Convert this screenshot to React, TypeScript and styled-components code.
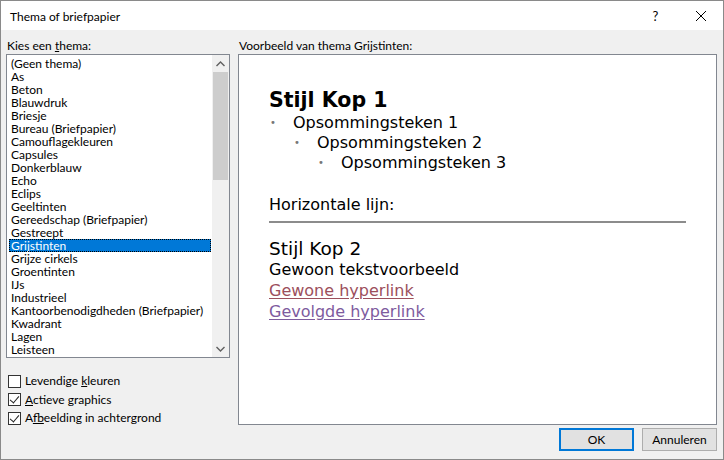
import React from 'react';
import styled, { createGlobalStyle } from 'styled-components';

const GlobalStyle = createGlobalStyle`
	html, body {
		margin: 0;
		padding: 0;
		background: #ffffff;
	}
	body {
		font-family: Lato, 'Noto Sans', sans-serif;
		font-size: 12px;
		color: #000;
	}
`;

const themes = [
	'(Geen thema)',
	'As',
	'Beton',
	'Blauwdruk',
	'Briesje',
	'Bureau (Briefpapier)',
	'Camouflagekleuren',
	'Capsules',
	'Donkerblauw',
	'Echo',
	'Eclips',
	'Geeltinten',
	'Gereedschap (Briefpapier)',
	'Gestreept',
	'Grijstinten',
	'Grijze cirkels',
	'Groentinten',
	'IJs',
	'Industrieel',
	'Kantoorbenodigdheden (Briefpapier)',
	'Kwadrant',
	'Lagen',
	'Leisteen',
];

const selected = 'Grijstinten';

export default function App() {
	return (
		<>
			<GlobalStyle />
			<Window>
				<TitleBar>
					<Title>Thema of briefpapier</Title>
					<TitleButton>?</TitleButton>
					<TitleButton>
						<svg width='12' height='12' viewBox='0 0 12 12'>
							<path d='M1 1 L11 11 M11 1 L1 11' stroke='#000' strokeWidth='1' />
						</svg>
					</TitleButton>
				</TitleBar>
				<Body>
					<LeftColumn>
						<Label>
							Kies een <u>t</u>hema:
						</Label>
						<ListBox>
							<Items>
								{themes.map(t => (
									<Item key={t} selected={t === selected}>
										{t}
									</Item>
								))}
							</Items>
							<ScrollBar>
								<Arrow>
									<svg width='9' height='6' viewBox='0 0 9 6'>
										<path d='M0.5 5 L4.5 1 L8.5 5' fill='none' stroke='#606060' strokeWidth='1.4' />
									</svg>
								</Arrow>
								<Track>
									<Thumb />
								</Track>
								<Arrow>
									<svg width='9' height='6' viewBox='0 0 9 6'>
										<path d='M0.5 1 L4.5 5 L8.5 1' fill='none' stroke='#606060' strokeWidth='1.4' />
									</svg>
								</Arrow>
							</ScrollBar>
						</ListBox>
						<Options>
							<CheckRow>
								<CheckBox />
								<span>
									Levendige <u>k</u>leuren
								</span>
							</CheckRow>
							<CheckRow>
								<CheckBox>
									<CheckMark />
								</CheckBox>
								<span>
									<u>A</u>ctieve graphics
								</span>
							</CheckRow>
							<CheckRow>
								<CheckBox>
									<CheckMark />
								</CheckBox>
								<span>
									A<u>f</u>beelding in achtergrond
								</span>
							</CheckRow>
						</Options>
					</LeftColumn>
					<RightColumn>
						<Label>Voorbeeld van thema Grijstinten:</Label>
						<Preview>
							<Heading1>Stijl Kop 1</Heading1>
							<Bullet level={0}>Opsommingsteken 1</Bullet>
							<Bullet level={1}>Opsommingsteken 2</Bullet>
							<Bullet level={2}>Opsommingsteken 3</Bullet>
							<RuleLabel>Horizontale lijn:</RuleLabel>
							<Rule />
							<Heading2>Stijl Kop 2</Heading2>
							<PreviewText>Gewoon tekstvoorbeeld</PreviewText>
							<PreviewLink color='#9c4f5c'>Gewone hyperlink</PreviewLink>
							<PreviewLink color='#7e5b9e'>Gevolgde hyperlink</PreviewLink>
						</Preview>
						<Buttons>
							<Button primary>OK</Button>
							<Button>Annuleren</Button>
						</Buttons>
					</RightColumn>
				</Body>
			</Window>
		</>
	);
}

const Window = styled.div`
	width: 724px;
	height: 460px;
	box-sizing: border-box;
	border: 1px solid #8a8a8a;
	background: #f0f0f0;
	display: flex;
	flex-direction: column;
`;

const TitleBar = styled.div`
	height: 29px;
	background: #ffffff;
	display: flex;
	align-items: center;
	padding-left: 9px;
	flex-shrink: 0;
`;

const Title = styled.div`
	flex: 1;
	padding-top: 1px;
`;

const TitleButton = styled.div`
	width: 45px;
	height: 29px;
	display: flex;
	align-items: center;
	justify-content: center;
	font-size: 13px;
	&:first-of-type {
		width: 40px;
	}
`;

const Body = styled.div`
	flex: 1;
	display: flex;
	padding: 8px 6px 0 5px;
	gap: 8px;
`;

const LeftColumn = styled.div`
	width: 224px;
	display: flex;
	flex-direction: column;
`;

const RightColumn = styled.div`
	flex: 1;
	display: flex;
	flex-direction: column;
`;

const Label = styled.div`
	height: 16px;
	line-height: 16px;
	padding-left: 1px;
`;

const ListBox = styled.div`
	height: 304px;
	box-sizing: border-box;
	border: 1px solid #828790;
	background: #ffffff;
	display: flex;
	padding: 2px 0 0 2px;
`;

const Items = styled.div`
	flex: 1;
	overflow: hidden;
`;

const Item = styled.div<{ selected?: boolean }>`
	height: 13px;
	line-height: 13px;
	padding-left: 2px;
	margin-right: 1px;
	white-space: nowrap;
	box-sizing: border-box;
	background: ${p => (p.selected ? '#0078d7' : 'transparent')};
	color: ${p => (p.selected ? '#ffffff' : '#000000')};
	outline: ${p => (p.selected ? '1px dotted #000' : 'none')};
	outline-offset: -1px;
`;

const ScrollBar = styled.div`
	width: 17px;
	margin-top: -2px;
	background: #f0f0f0;
	display: flex;
	flex-direction: column;
`;

const Arrow = styled.div`
	height: 17px;
	display: flex;
	align-items: center;
	justify-content: center;
`;

const Track = styled.div`
	flex: 1;
	display: flex;
	flex-direction: column;
	padding: 0 1px;
`;

const Thumb = styled.div`
	height: 108px;
	background: #cdcdcd;
`;

const Options = styled.div`
	display: flex;
	flex-direction: column;
	gap: 4px;
	margin-top: 16px;
	padding-left: 2px;
`;

const CheckRow = styled.div`
	display: flex;
	align-items: center;
	gap: 4px;
	height: 14.5px;
	line-height: 14px;
`;

const CheckBox = styled.div`
	width: 13px;
	height: 13px;
	box-sizing: border-box;
	border: 1px solid #333333;
	background: #ffffff;
	position: relative;
`;

const CheckMark = styled.div`
	position: absolute;
	left: 3px;
	top: 0px;
	width: 4px;
	height: 8px;
	border-right: 1.5px solid #222;
	border-bottom: 1.5px solid #222;
	transform: rotate(40deg);
`;

const Preview = styled.div`
	height: 371px;
	box-sizing: border-box;
	border: 1px solid #828790;
	background: #ffffff;
	padding: 33px 30px 0 30px;
	font-family: 'DejaVu Sans', Verdana, sans-serif;
	display: flex;
	flex-direction: column;
`;

const Heading1 = styled.div`
	font-size: 20.5px;
	font-weight: bold;
	line-height: 25px;
`;

const Bullet = styled.div<{ level: number }>`
	font-size: 16px;
	line-height: 20px;
	padding-left: ${p => p.level * 24 + 24}px;
	position: relative;
	&::before {
		content: '•';
		position: absolute;
		left: ${p => p.level * 24 + 1}px;
		top: 0;
		color: #777;
		font-size: 10px;
	}
`;

const RuleLabel = styled.div`
	font-size: 16px;
	line-height: 20px;
	margin-top: 22px;
`;

const Rule = styled.div`
	height: 2px;
	background: #8c8c8c;
	width: 417px;
	margin: 6px 0 15px;
`;

const Heading2 = styled.div`
	font-size: 18.5px;
	line-height: 22px;
`;

const PreviewText = styled.div`
	font-size: 16px;
	line-height: 20px;
`;

const PreviewLink = styled.div<{ color: string }>`
	font-size: 16px;
	line-height: 21px;
	color: ${p => p.color};
	text-decoration: underline;
	text-underline-offset: 2px;
`;

const Buttons = styled.div`
	display: flex;
	justify-content: flex-end;
	gap: 8px;
	margin-top: 3px;
`;

const Button = styled.div<{ primary?: boolean }>`
	width: 75px;
	height: 23px;
	box-sizing: border-box;
	border: ${p => (p.primary ? '2px solid #0078d7' : '1px solid #adadad')};
	background: #e1e1e1;
	display: flex;
	align-items: center;
	justify-content: center;
`;
